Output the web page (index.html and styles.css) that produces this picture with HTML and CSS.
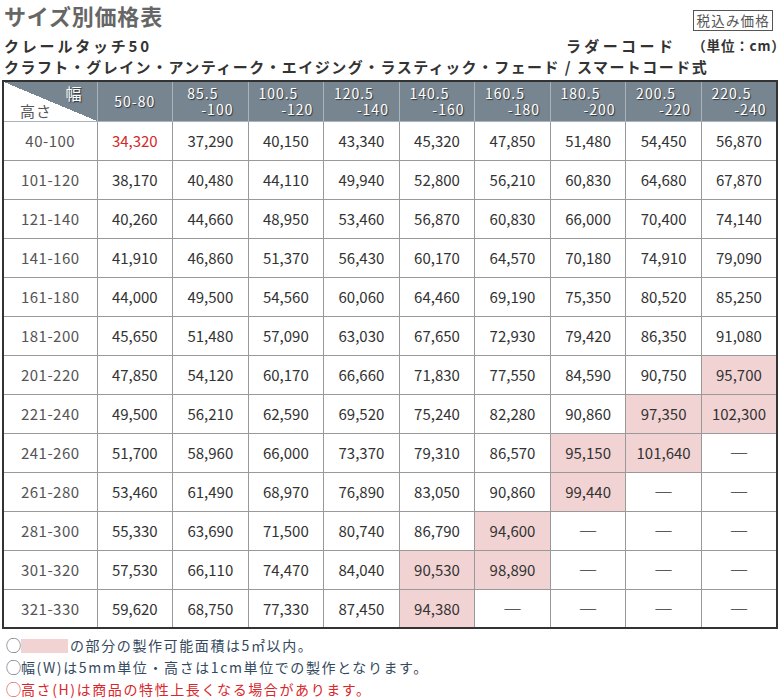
FILE: index.html
```html
<!DOCTYPE html>
<html lang="ja">
<head>
<meta charset="utf-8">
<title>サイズ別価格表</title>
<link rel="stylesheet" href="styles.css">
</head>
<body>
<div class="page">
  <div class="top">
    <h1 class="title">サイズ別価格表</h1>
    <div class="tax">税込み価格</div>
  </div>
  <div class="sub">
    <div class="product">クレールタッチ50</div>
    <div class="cord">ラダーコード</div>
    <div class="unit">（単位：cm<span class="close">）</span></div>
  </div>
  <div class="finish">クラフト・グレイン・アンティーク・エイジング・ラスティック・フェード / スマートコード式</div>
  <table class="price">
    <colgroup>
      <col class="c-first">
      <col><col><col><col><col><col><col><col><col>
    </colgroup>
    <thead>
      <tr>
        <th class="corner"><div class="corner-in"><span class="w">幅</span><span class="h">高さ</span></div></th>
        <th>50-80</th>
        <th><span class="hd"><span class="a">85.5</span><span class="b">-100</span></span></th>
        <th><span class="hd"><span class="a">100.5</span><span class="b">-120</span></span></th>
        <th><span class="hd"><span class="a">120.5</span><span class="b">-140</span></span></th>
        <th><span class="hd"><span class="a">140.5</span><span class="b">-160</span></span></th>
        <th><span class="hd"><span class="a">160.5</span><span class="b">-180</span></span></th>
        <th><span class="hd"><span class="a">180.5</span><span class="b">-200</span></span></th>
        <th><span class="hd"><span class="a">200.5</span><span class="b">-220</span></span></th>
        <th><span class="hd"><span class="a">220.5</span><span class="b">-240</span></span></th>
      </tr>
    </thead>
    <tbody>
      <tr><th>40-100</th><td class="red">34,320</td><td>37,290</td><td>40,150</td><td>43,340</td><td>45,320</td><td>47,850</td><td>51,480</td><td>54,450</td><td>56,870</td></tr>
      <tr><th>101-120</th><td>38,170</td><td>40,480</td><td>44,110</td><td>49,940</td><td>52,800</td><td>56,210</td><td>60,830</td><td>64,680</td><td>67,870</td></tr>
      <tr><th>121-140</th><td>40,260</td><td>44,660</td><td>48,950</td><td>53,460</td><td>56,870</td><td>60,830</td><td>66,000</td><td>70,400</td><td>74,140</td></tr>
      <tr><th>141-160</th><td>41,910</td><td>46,860</td><td>51,370</td><td>56,430</td><td>60,170</td><td>64,570</td><td>70,180</td><td>74,910</td><td>79,090</td></tr>
      <tr><th>161-180</th><td>44,000</td><td>49,500</td><td>54,560</td><td>60,060</td><td>64,460</td><td>69,190</td><td>75,350</td><td>80,520</td><td>85,250</td></tr>
      <tr><th>181-200</th><td>45,650</td><td>51,480</td><td>57,090</td><td>63,030</td><td>67,650</td><td>72,930</td><td>79,420</td><td>86,350</td><td>91,080</td></tr>
      <tr><th>201-220</th><td>47,850</td><td>54,120</td><td>60,170</td><td>66,660</td><td>71,830</td><td>77,550</td><td>84,590</td><td>90,750</td><td class="pk">95,700</td></tr>
      <tr><th>221-240</th><td>49,500</td><td>56,210</td><td>62,590</td><td>69,520</td><td>75,240</td><td>82,280</td><td>90,860</td><td class="pk">97,350</td><td class="pk">102,300</td></tr>
      <tr><th>241-260</th><td>51,700</td><td>58,960</td><td>66,000</td><td>73,370</td><td>79,310</td><td>86,570</td><td class="pk">95,150</td><td class="pk">101,640</td><td class="na">―</td></tr>
      <tr><th>261-280</th><td>53,460</td><td>61,490</td><td>68,970</td><td>76,890</td><td>83,050</td><td>90,860</td><td class="pk">99,440</td><td class="na">―</td><td class="na">―</td></tr>
      <tr><th>281-300</th><td>55,330</td><td>63,690</td><td>71,500</td><td>80,740</td><td>86,790</td><td class="pk">94,600</td><td class="na">―</td><td class="na">―</td><td class="na">―</td></tr>
      <tr><th>301-320</th><td>57,530</td><td>66,110</td><td>74,470</td><td>84,040</td><td class="pk">90,530</td><td class="pk">98,890</td><td class="na">―</td><td class="na">―</td><td class="na">―</td></tr>
      <tr><th>321-330</th><td>59,620</td><td>68,750</td><td>77,330</td><td>87,450</td><td class="pk">94,380</td><td class="na">―</td><td class="na">―</td><td class="na">―</td><td class="na">―</td></tr>
    </tbody>
  </table>
  <div class="notes">
    <p><span class="mark">◯</span><span class="swatch"></span>の部分の製作可能面積は5㎡以内。</p>
    <p><span class="mark">◯</span>幅(W)は5mm単位・高さは1cm単位での製作となります。</p>
    <p class="warn"><span class="mark">◯</span>高さ(H)は商品の特性上長くなる場合があります。</p>
  </div>
</div>
</body>
</html>
```
FILE: styles.css
```css
* { box-sizing: border-box; }
body {
  margin: 0;
  background: #fff;
  font-family: "Noto Sans CJK JP", "Noto Sans", sans-serif;
  color: #333;
}
.page {
  width: 780px;
  padding: 0 2px;
}
.top {
  display: flex;
  justify-content: space-between;
  align-items: flex-start;
  height: 35px;
}
.title {
  margin: 0;
  padding-left: 2px;
  font-size: 22px;
  line-height: 31px;
  font-weight: bold;
  color: #666;
  letter-spacing: 0.8px;
}
.tax {
  margin-top: 10px;
  margin-right: 5px;
  height: 21px;
  padding: 0 2px 0 3px;
  border: 1px solid #555;
  font-size: 13.5px;
  line-height: 19px;
  color: #555;
  letter-spacing: 1.2px;
}
.sub {
  display: flex;
  height: 21px;
  line-height: 21px;
  font-size: 15px;
  font-weight: bold;
  color: #333;
}
.product {
  flex: 1;
  padding-left: 2px;
  letter-spacing: 2.8px;
}
.cord {
  letter-spacing: 3.4px;
  margin-right: 16px;
}
.unit {
  font-size: 13.5px;
  letter-spacing: 0.8px;
}
.unit .close {
  font-feature-settings: "halt";
  letter-spacing: 0;
}
.finish {
  height: 22px;
  margin-bottom: 2px;
  padding-left: 2px;
  font-size: 15px;
  line-height: 22px;
  font-weight: bold;
  color: #333;
  letter-spacing: 1.45px;
  white-space: nowrap;
}
.price {
  width: 776px;
  border-collapse: collapse;
  table-layout: fixed;
  border: 2px solid #333;
}
.c-first { width: 94px; }
.price th,
.price td {
  padding: 0;
  border: 1px solid #999;
  text-align: center;
  font-weight: normal;
}
.price thead th {
  height: 40px;
  background: #778590;
  border-color: #a9b3bb;
  border-top-color: #333;
  color: #fff;
  font-size: 14px;
  line-height: 16px;
  letter-spacing: 1px;
  text-shadow: 1px 1px 1px rgba(0, 0, 0, 0.6);
}
.price thead th:first-child { border-left-color: #333; }
.price thead th:last-child { border-right-color: #333; }
.price thead th.corner {
  background: linear-gradient(to top right, #fff 50%, #778590 50%);
  border-right-color: #a9b3bb;
}
.corner-in {
  display: flex;
  flex-direction: column;
  height: 38px;
}
.corner-in .w {
  align-self: flex-end;
  padding-right: 14px;
  font-size: 16px;
  line-height: 18px;
  padding-top: 2px;
}
.corner-in .h {
  align-self: flex-start;
  padding-left: 16px;
  font-size: 15px;
  line-height: 18px;
  color: #555;
  text-shadow: none;
}
.hd {
  display: inline-block;
  vertical-align: middle;
}
.hd .a {
  display: block;
  text-align: left;
  padding-right: 15px;
}
.hd .b {
  display: block;
  text-align: right;
}
.price tbody td,
.price tbody th {
  height: 39px;
  font-size: 15px;
  color: #333;
}
.price tbody th {
  color: #555;
  letter-spacing: 0.5px;
}
.price tbody td.red { color: #d22a2a; }
.price tbody td.pk { background: #f2d3d3; }
.price tbody td.na {
  font-size: 19px;
  font-weight: 300;
  color: #333;
}
.notes {
  margin-top: 5px;
  padding-left: 2px;
  font-size: 14px;
  line-height: 22px;
  color: #34495e;
  letter-spacing: 1.6px;
}
.notes p { margin: 0; white-space: nowrap; }
.mark {
  font-size: 15px;
  line-height: 14px;
  letter-spacing: 0;
  margin-left: 2px;
}
.swatch {
  display: inline-block;
  width: 47px;
  height: 14px;
  margin-right: 2px;
  background: #f2d3d3;
  vertical-align: -2px;
}
.notes .warn { color: #d9262b; }
```
